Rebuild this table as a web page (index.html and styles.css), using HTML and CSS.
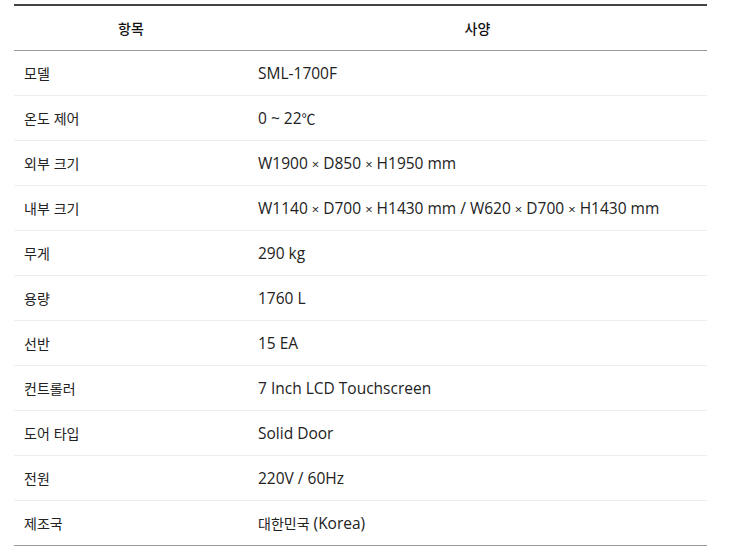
FILE: index.html
```html
<!DOCTYPE html>
<html lang="ko">
<head>
<meta charset="utf-8">
<link rel="stylesheet" href="styles.css">
</head>
<body>
<table class="spec">
  <thead>
    <tr><th class="c1">항목</th><th class="c2">사양</th></tr>
  </thead>
  <tbody>
    <tr><td>모델</td><td class="val">SML-1700F</td></tr>
    <tr><td>온도 제어</td><td class="val">0 ~ 22<span class="deg">℃</span></td></tr>
    <tr><td>외부 크기</td><td class="val">W1900 <span class="x">×</span> D850 <span class="x">×</span> H1950 mm</td></tr>
    <tr><td>내부 크기</td><td class="val">W1140 <span class="x">×</span> D700 <span class="x">×</span> H1430 mm / W620 <span class="x">×</span> D700 <span class="x">×</span> H1430 mm</td></tr>
    <tr><td>무게</td><td class="val">290 kg</td></tr>
    <tr><td>용량</td><td class="val">1760 L</td></tr>
    <tr><td>선반</td><td class="val">15 EA</td></tr>
    <tr><td>컨트롤러</td><td class="val">7 Inch LCD Touchscreen</td></tr>
    <tr><td>도어 타입</td><td class="val">Solid Door</td></tr>
    <tr><td>전원</td><td class="val">220V / 60Hz</td></tr>
    <tr><td>제조국</td><td class="val"><span class="ko">대한민국</span> (Korea)</td></tr>
  </tbody>
</table>
</body>
</html>
```

FILE: styles.css
```css
html, body { margin: 0; padding: 0; background: #fff; }
body {
  padding: 4px 23px 0 14px;
  font-family: "Noto Sans CJK KR", "Noto Sans", sans-serif;
  color: #222;
}
.spec {
  width: 693px;
  border-collapse: collapse;
  border-top: 2px solid #444;
  border-bottom: 1px solid #999;
  font-size: 14px;
}
.spec th {
  height: 44px;
  font-weight: 500;
  text-align: center;
  border-bottom: 1px solid #999;
  padding: 0;
  color: #111;
}
.spec .c1 { width: 234px; }
.spec td {
  height: 44px;
  padding: 0 10px;
  text-align: left;
  border-top: 1px solid #eee;
  line-height: 20px;
}
.spec tbody tr:first-child td { border-top: none; }
.spec td.val {
  font-family: "Open Sans", "Noto Sans CJK KR", sans-serif;
  font-size: 15.5px;
  color: #222;
}
.spec .x { font-size: 13px; }
.spec .deg { font-family: "Noto Sans CJK KR", sans-serif; font-size: 14px; letter-spacing: -1px; }
.spec .ko { font-family: "Noto Sans CJK KR", sans-serif; font-size: 14px; }
```
